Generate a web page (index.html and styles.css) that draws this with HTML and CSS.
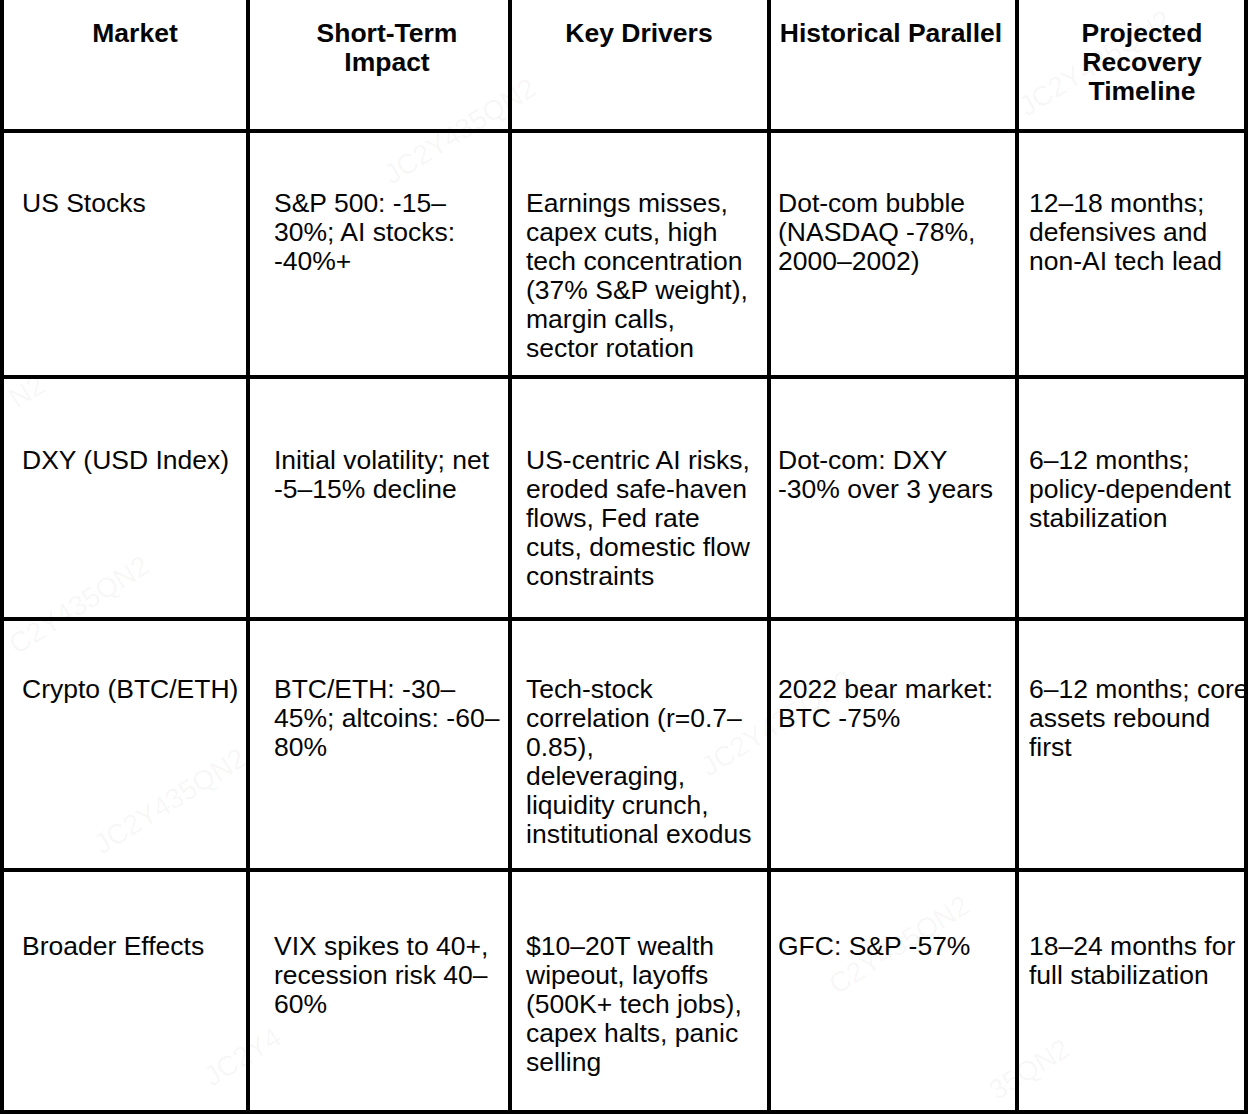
FILE: index.html
```html
<!DOCTYPE html>
<html lang="en">
<head>
<meta charset="utf-8">
<title>Market Impact Table</title>
<link rel="stylesheet" href="styles.css">
</head>
<body>
<div class="sheet">
  <div class="grid">
    <div class="row head">
      <div class="cell c1"><div class="txt">Market</div></div>
      <div class="cell c2"><div class="txt">Short-Term<br>Impact</div></div>
      <div class="cell c3"><div class="txt">Key Drivers</div></div>
      <div class="cell c4"><div class="txt">Historical Parallel</div></div>
      <div class="cell c5"><div class="txt">Projected<br>Recovery<br>Timeline</div></div>
    </div>
    <div class="row r1">
      <div class="cell c1"><div class="txt">US Stocks</div></div>
      <div class="cell c2"><div class="txt">S&amp;P 500: -15–<br>30%; AI stocks:<br>-40%+</div></div>
      <div class="cell c3"><div class="txt">Earnings misses,<br>capex cuts, high<br>tech concentration<br>(37% S&amp;P weight),<br>margin calls,<br>sector rotation</div></div>
      <div class="cell c4"><div class="txt">Dot-com bubble<br>(NASDAQ -78%,<br>2000–2002)</div></div>
      <div class="cell c5"><div class="txt">12–18 months;<br>defensives and<br>non-AI tech lead</div></div>
    </div>
    <div class="row r2">
      <div class="cell c1"><div class="txt">DXY (USD Index)</div></div>
      <div class="cell c2"><div class="txt">Initial volatility; net<br>-5–15% decline</div></div>
      <div class="cell c3"><div class="txt">US-centric AI risks,<br>eroded safe-haven<br>flows, Fed rate<br>cuts, domestic flow<br>constraints</div></div>
      <div class="cell c4"><div class="txt">Dot-com: DXY<br>-30% over 3 years</div></div>
      <div class="cell c5"><div class="txt">6–12 months;<br>policy-dependent<br>stabilization</div></div>
    </div>
    <div class="row r3">
      <div class="cell c1"><div class="txt">Crypto (BTC/ETH)</div></div>
      <div class="cell c2"><div class="txt">BTC/ETH: -30–<br>45%; altcoins: -60–<br>80%</div></div>
      <div class="cell c3"><div class="txt">Tech-stock<br>correlation (r=0.7–<br>0.85),<br>deleveraging,<br>liquidity crunch,<br>institutional exodus</div></div>
      <div class="cell c4"><div class="txt">2022 bear market:<br>BTC -75%</div></div>
      <div class="cell c5"><div class="txt">6–12 months; core<br>assets rebound<br>first</div></div>
    </div>
    <div class="row r4">
      <div class="cell c1"><div class="txt">Broader Effects</div></div>
      <div class="cell c2"><div class="txt">VIX spikes to 40+,<br>recession risk 40–<br>60%</div></div>
      <div class="cell c3"><div class="txt">$10–20T wealth<br>wipeout, layoffs<br>(500K+ tech jobs),<br>capex halts, panic<br>selling</div></div>
      <div class="cell c4"><div class="txt">GFC: S&amp;P -57%</div></div>
      <div class="cell c5"><div class="txt">18–24 months for<br>full stabilization</div></div>
    </div>
  </div>
  <span class="wm wm1">JC2Y435QN2</span>
  <span class="wm wm2">JC2Y435QN2</span>
  <span class="wm wm3">N2</span>
  <span class="wm wm4">C2Y435QN2</span>
  <span class="wm wm5">JC2Y435QN2</span>
  <span class="wm wm6">JC2Y435QN2</span>
  <span class="wm wm7">C2Y435QN2</span>
  <span class="wm wm8">JC2Y4</span>
  <span class="wm wm9">35QN2</span>
</div>
</body>
</html>
```

FILE: styles.css
```css
html, body {
  margin: 0;
  padding: 0;
  background: #fff;
  overflow: hidden;
}

.sheet {
  position: relative;
  width: 1248px;
  height: 1114px;
  overflow: hidden;
  font-family: "Liberation Sans", Arial, Helvetica, sans-serif;
  font-size: 26.5px;
  line-height: 29px;
  color: #050505;
}

.grid {
  display: grid;
  box-sizing: border-box;
  width: 1248px;
  grid-template-columns: 242px 258px 255px 244px 225px;
  grid-template-rows: 129px 242px 238px 247px 238px;
  gap: 4px;
  padding: 0 4px 4px 4px;
  background: #000;
}

.row {
  display: contents;
}

.cell {
  background: #fff;
  min-width: 0;
  box-sizing: border-box;
}

.txt {
  width: 226px;
  white-space: nowrap;
}

.c1 { padding-left: 18px; }
.c2 { padding-left: 24px; }
.c3 { padding-left: 14px; }
.c4 { padding-left: 7px; }
.c5 { padding-left: 10px; }

.head .cell {
  padding-top: 19px;
  font-weight: bold;
}
.head .txt {
  text-align: center;
}

.r1 .cell { padding-top: 56px; }
.r2 .cell { padding-top: 67px; }
.r3 .cell { padding-top: 54px; }
.r4 .cell { padding-top: 60px; }

.wm {
  position: absolute;
  font-size: 28px;
  line-height: 30px;
  color: rgba(0, 0, 0, 0.045);
  transform: rotate(-32deg);
  transform-origin: left bottom;
  white-space: nowrap;
  pointer-events: none;
}
.wm1 { left: 395px; top: 160px; }
.wm2 { left: 1030px; top: 92px; }
.wm3 { left: 20px; top: 384px; }
.wm4 { left: 20px; top: 630px; }
.wm5 { left: 105px; top: 830px; }
.wm6 { left: 712px; top: 752px; }
.wm7 { left: 840px; top: 970px; }
.wm8 { left: 215px; top: 1062px; }
.wm9 { left: 1000px; top: 1076px; }
```
